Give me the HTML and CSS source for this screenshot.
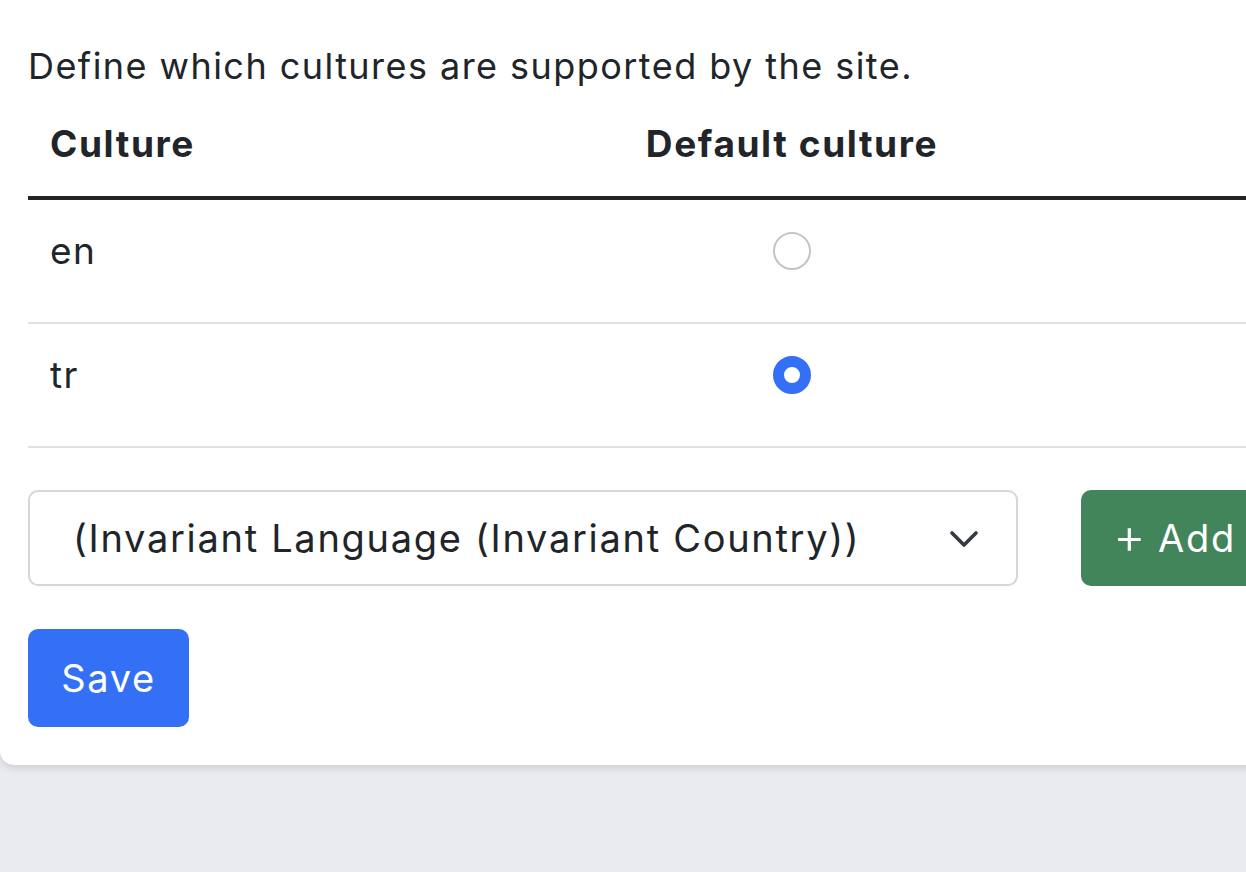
FILE: index.html
```html
<!DOCTYPE html>
<html lang="en">
<head>
    <meta charset="UTF-8">
    <meta name="viewport" content="width=device-width, initial-scale=1.0">
    <title>Cultures</title>
    <link rel="stylesheet" href="styles.css">
</head>
<body>
    <div class="card">
        <p class="hint">Define which cultures are supported by the site.</p>

        <!-- Supported cultures -->
        <table class="culture-table">
            <thead>
                <tr>
                    <th class="col-name">Culture</th>
                    <th class="col-default">Default culture</th>
                    <th class="col-actions"></th>
                </tr>
            </thead>
            <tbody>
                <tr>
                    <td>en</td>
                    <td class="col-default"><input type="radio" name="default-culture" class="radio" value="en"></td>
                    <td></td>
                </tr>
                <tr>
                    <td>tr</td>
                    <td class="col-default"><input type="radio" name="default-culture" class="radio" value="tr" checked></td>
                    <td></td>
                </tr>
            </tbody>
        </table>

        <!-- Add a culture -->
        <div class="add-row">
            <div class="select-wrap">
                <select class="culture-select">
                    <option>(Invariant Language (Invariant Country))</option>
                </select>
                <svg class="chevron" viewBox="0 0 30 18" width="30" height="18">
                    <path d="M3 3 L15 15 L27 3" fill="none" stroke="#343a40" stroke-width="3.6" stroke-linecap="round" stroke-linejoin="round"/>
                </svg>
            </div>
            <button class="btn btn-add"><span class="plus">+</span> Add</button>
        </div>

        <button class="btn btn-save">Save</button>
    </div>
</body>
</html>
```

FILE: styles.css
```css
html, body {
    margin: 0;
    padding: 0;
    overflow: hidden;
}

body {
    font-family: 'Inter', 'Liberation Sans', sans-serif;
    background-color: #e9ebef;
    color: #212529;
    height: 872px;
}

.card {
    background-color: #fff;
    width: 1400px;
    box-sizing: border-box;
    padding: 39px 0 38px 28px;
    border-radius: 0 0 14px 14px;
    box-shadow: 0 3px 8px rgba(0, 0, 0, 0.12);
}

.hint {
    font-size: 36px;
    letter-spacing: 1.45px;
    line-height: 54px;
    margin: 0 0 17px;
}

.culture-table {
    border-collapse: collapse;
    width: 1300px;
    table-layout: fixed;
}

.culture-table th,
.culture-table td {
    font-size: 37px;
    letter-spacing: 1.5px;
    padding: 0 22px;
    text-align: left;
    line-height: 56px;
    white-space: nowrap;
}

.culture-table th {
    height: 80px;
    padding-top: 6px;
    font-weight: 700;
    letter-spacing: 1.6px;
    vertical-align: top;
    border-bottom: 4px solid #212529;
}

.culture-table td {
    height: 99px;
    padding-top: 23px;
    border-bottom: 2px solid #dee2e6;
    vertical-align: top;
}

.col-name {
    width: 548px;
}

.col-default {
    width: 300px;
}

.culture-table .col-default {
    text-align: center;
}

.radio {
    appearance: none;
    -webkit-appearance: none;
    width: 38px;
    height: 38px;
    margin: 9px 0 0;
    border: 2px solid #c5c5c5;
    border-radius: 50%;
    background-color: #fff;
    vertical-align: top;
    box-sizing: border-box;
}

.radio:checked {
    border: 11px solid #3370f6;
}

.add-row {
    display: flex;
    gap: 63px;
    margin-top: 42px;
}

.select-wrap {
    position: relative;
    width: 990px;
    height: 96px;
}

.culture-select {
    appearance: none;
    -webkit-appearance: none;
    width: 100%;
    height: 100%;
    box-sizing: border-box;
    border: 2px solid #d3d6da;
    border-radius: 10px;
    background-color: #fff;
    color: #212529;
    font-family: inherit;
    font-size: 38px;
    letter-spacing: 1.7px;
    padding: 0 0 0 43px;
}

.chevron {
    position: absolute;
    right: 39px;
    top: 40px;
    pointer-events: none;
}

.btn {
    font-family: inherit;
    color: #fff;
    border: none;
    border-radius: 10px;
    cursor: pointer;
    font-size: 38px;
    letter-spacing: 1.7px;
}

.btn-add {
    background-color: #43855a;
    height: 96px;
    padding: 0 32px;
    flex-shrink: 0;
    white-space: nowrap;
}

.plus {
    font-size: 50px;
    font-weight: 300;
    line-height: 0;
    vertical-align: -2px;
    letter-spacing: 0;
}

.btn-save {
    background-color: #3370f6;
    width: 161px;
    height: 98px;
    margin-top: 43px;
    display: block;
}
```
